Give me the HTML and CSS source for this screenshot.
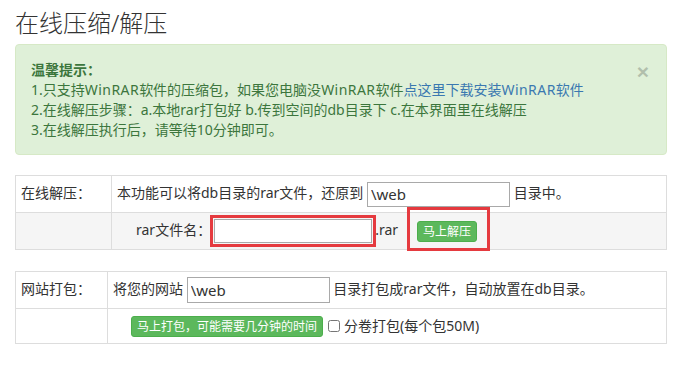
FILE: index.html
```html
<!DOCTYPE html>
<html lang="zh-CN">
<head>
<meta charset="utf-8">
<title>在线压缩/解压</title>
<link rel="stylesheet" href="styles.css">
</head>
<body>
<div class="page">
  <h3 class="title">在线压缩/解压</h3>

  <div class="alert">
    <button class="close" type="button">×</button>
    <div class="alert-head">温馨提示：</div>
    <div>1.只支持<span class="wide">WinRAR</span>软件的压缩包，如果您电脑没<span class="wide">WinRAR</span>软件<a class="link" href="#">点这里下载安装<span class="wide">WinRAR</span>软件</a></div>
    <div>2.在线解压步骤：a.本地rar打包好 b.传到空间的db目录下 c.在本界面里在线解压</div>
    <div>3.在线解压执行后，请等待10分钟即可。</div>
  </div>

  <table class="grid grid-unpack">
    <tr>
      <td class="label">在线解压：</td>
      <td class="content">本功能可以将db目录的rar文件，还原到 <input class="field field-path" type="text" value="\web"> 目录中。</td>
    </tr>
    <tr class="shade">
      <td class="label"></td>
      <td class="content indent">rar文件名：<span class="mark mark-input"><input class="field field-name" type="text"></span>.rar<span class="mark mark-btn"><button class="btn" type="button">马上解压</button></span></td>
    </tr>
  </table>

  <table class="grid grid-pack">
    <tr>
      <td class="label">网站打包：</td>
      <td class="content">将您的网站 <input class="field field-site" type="text" value="\web"> 目录打包成rar文件，自动放置在db目录。</td>
    </tr>
    <tr>
      <td class="label"></td>
      <td class="content indent2"><button class="btn" type="button">马上打包，可能需要几分钟的时间</button><label class="check"><input type="checkbox"> 分卷打包(每个包50M)</label></td>
    </tr>
  </table>
</div>
</body>
</html>
```

FILE: styles.css
```css
* { box-sizing: border-box; }

body {
  margin: 0;
  background: #fff;
  color: #333;
  font-family: "Noto Sans", "Noto Sans CJK SC", sans-serif;
  font-size: 14px;
  line-height: 20px;
}

.page {
  padding: 0 19px 0 15px;
}

.title {
  margin: 10px 0 8px;
  font-size: 24px;
  line-height: 26px;
  font-weight: 300;
  color: #333;
}

.alert {
  background: #dff0d8;
  border: 1px solid #d6e9c6;
  border-radius: 4px;
  color: #3c763d;
  padding: 15px 15px 14px 15px;
  margin-bottom: 20px;
}

.alert-head {
  font-weight: 700;
}

.wide {
  letter-spacing: 0.45px;
}

.link {
  color: #3a78b0;
  text-decoration: none;
}

.close {
  float: right;
  margin: 1px 2px 0 0;
  padding: 0;
  border: 0;
  background: transparent;
  font-family: "Liberation Sans", sans-serif;
  font-size: 21px;
  font-weight: 700;
  line-height: 1;
  color: #000;
  opacity: .2;
}

.grid {
  width: 100%;
  border-collapse: collapse;
  margin-bottom: 21px;
}

.grid td {
  border: 1px solid #ddd;
  padding: 5px;
  height: 37px;
  vertical-align: middle;
  white-space: nowrap;
}

.grid-unpack .label { width: 96px; }
.grid-pack .label { width: 92px; }

.grid td.label {
  vertical-align: top;
  padding-top: 7px;
}

.grid-pack td { height: 36px; }
.grid-pack tr + tr td { height: 35px; }

.shade td { background: #f5f5f5; }

.grid td.indent { padding-left: 24px; }
.grid td.indent2 { padding-left: 23px; }

.field {
  font-family: "Noto Sans", "Noto Sans CJK SC", sans-serif;
  font-size: 15px;
  color: #333;
  border: 1px solid #a9a9a9;
  background: #fff;
  padding: 0 3px;
  height: 25px;
  margin: 0;
  vertical-align: middle;
}

.field-path { width: 143px; }
.field-name { width: 158px; height: 24px; }
.field-site { width: 143px; height: 26px; }

.mark {
  position: relative;
  display: inline-block;
  vertical-align: middle;
}

.mark::after {
  content: "";
  position: absolute;
  border: 3px solid #e53a3f;
  pointer-events: none;
}

.mark-input { margin: 0 3px 0 3px; }
.mark-input::after { top: -4px; left: -4px; right: -4px; bottom: -4px; }

.mark-btn { margin-left: 19px; }
.mark-btn::after { top: -13px; left: -10px; right: -13px; bottom: -9px; }

.btn {
  display: inline-block;
  font-family: "Noto Sans", "Noto Sans CJK SC", sans-serif;
  font-size: 12px;
  line-height: 17px;
  padding: 1px 5px;
  color: #fff;
  background: #5cb85c;
  border: 1px solid #4cae4c;
  border-radius: 3px;
  vertical-align: middle;
}

.check {
  display: inline-flex;
  align-items: center;
  vertical-align: middle;
  margin-left: 5px;
}

.check input {
  margin: 0 4px 0 0;
  width: 12px;
  height: 12px;
}
```
